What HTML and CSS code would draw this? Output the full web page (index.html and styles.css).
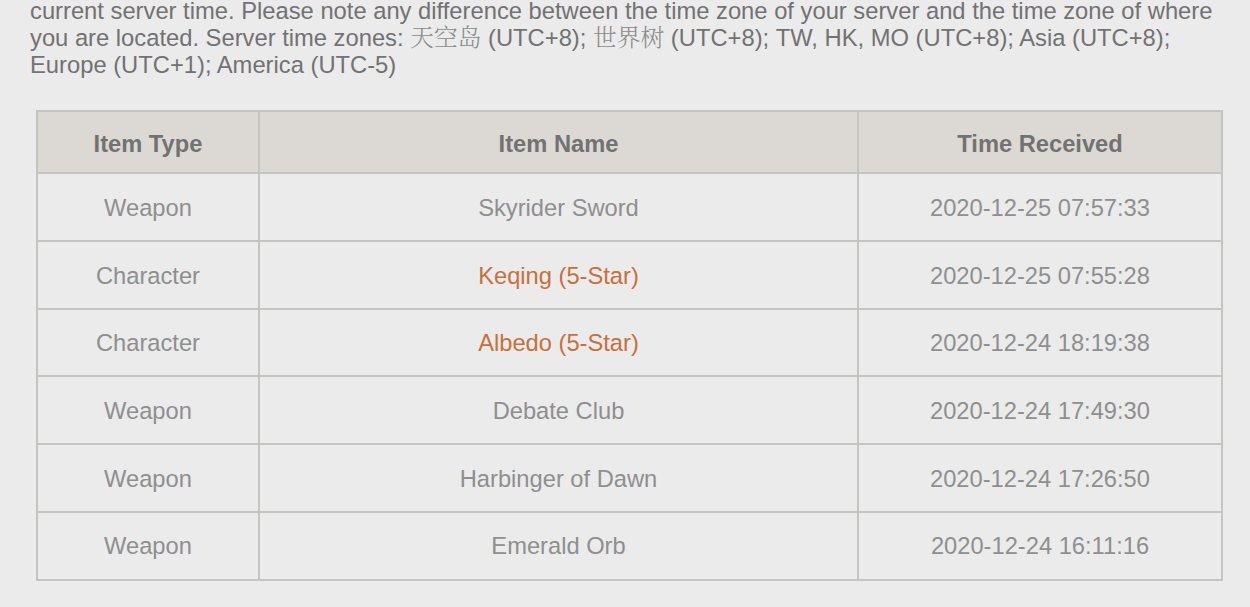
FILE: index.html
```html
<!DOCTYPE html>
<html lang="en">
<head>
<meta charset="utf-8">
<title>Wish History</title>
<link rel="stylesheet" href="styles.css">
</head>
<body>
<div class="page">
  <p class="note">current server time. Please note any difference between the time zone of your server and the time zone of where you are located. Server time zones: <span class="cjk">天空岛</span> (UTC+8); <span class="cjk">世界树</span> (UTC+8); TW, HK, MO (UTC+8); Asia (UTC+8); Europe (UTC+1); America (UTC-5)</p>
  <table class="history">
    <colgroup>
      <col class="c-type">
      <col class="c-name">
      <col class="c-time">
    </colgroup>
    <thead>
      <tr><th>Item Type</th><th>Item Name</th><th>Time Received</th></tr>
    </thead>
    <tbody>
      <tr><td>Weapon</td><td>Skyrider Sword</td><td>2020-12-25 07:57:33</td></tr>
      <tr><td>Character</td><td class="star5">Keqing (5-Star)</td><td>2020-12-25 07:55:28</td></tr>
      <tr><td>Character</td><td class="star5">Albedo (5-Star)</td><td>2020-12-24 18:19:38</td></tr>
      <tr><td>Weapon</td><td>Debate Club</td><td>2020-12-24 17:49:30</td></tr>
      <tr><td>Weapon</td><td>Harbinger of Dawn</td><td>2020-12-24 17:26:50</td></tr>
      <tr><td>Weapon</td><td>Emerald Orb</td><td>2020-12-24 16:11:16</td></tr>
    </tbody>
  </table>
</div>
</body>
</html>
```
FILE: styles.css
```css
html, body {
  margin: 0;
  padding: 0;
  background: #ebebeb;
}
body {
  font-family: "Liberation Sans", Arial, "Noto Sans CJK SC", sans-serif;
  overflow: hidden;
}
.page {
  padding: 0 20px 0 30px;
}
.note {
  margin: -2px 0 0 0;
  font-size: 23.75px;
  line-height: 26.8px;
  color: #727272;
}
.cjk {
  font-family: "Noto Serif CJK SC", "Noto Sans CJK SC", serif;
  font-weight: 300;
  line-height: 1;
  color: #8a8a8a;
}
.history {
  margin: 32px 0 0 6px;
  border-collapse: collapse;
  table-layout: fixed;
  width: 1187px;
  border: 2px solid #c6c4c0;
}
.c-type { width: 222px; }
.c-name { width: 599px; }
.c-time { width: 364px; }
.history th,
.history td {
  border: 2px solid #c6c4c0;
  text-align: center;
  font-size: 23.7px;
  line-height: 26px;
  padding: 0 4px;
}
.history th {
  background: #dcd9d5;
  color: #727272;
  font-weight: bold;
  padding-top: 18.5px;
  padding-bottom: 15.5px;
}
.history td {
  color: #8f8f8f;
  padding-top: 20.5px;
  padding-bottom: 19.2px;
}
.history td.star5 {
  color: #c8703a;
}
```
